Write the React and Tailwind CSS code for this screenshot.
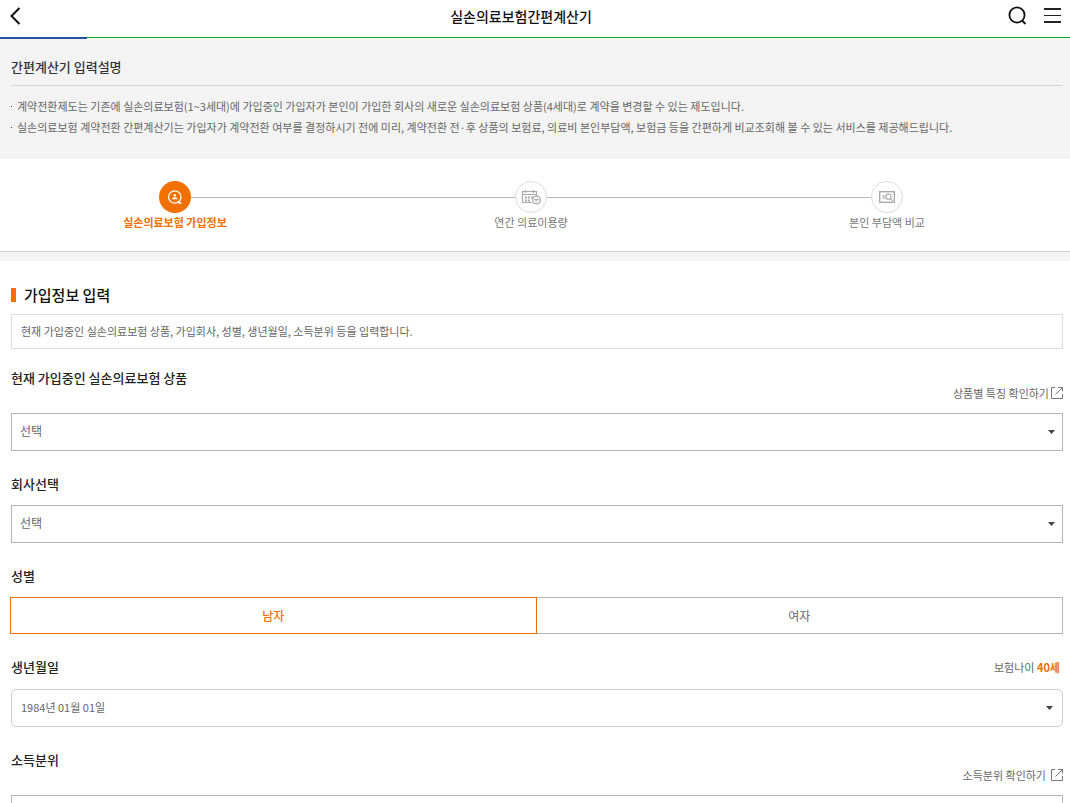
import { useState } from "react";

function BackIcon() {
  return (
    <svg width="12" height="18" viewBox="0 0 12 18" fill="none" stroke="#111" strokeWidth="2">
      <path d="M9.500 1L1.500 9l8 8" />
    </svg>
  );
}

function SearchIcon() {
  return (
    <svg width="20" height="20" viewBox="0 0 20 20" fill="none" stroke="#111" strokeWidth="1.800">
      <circle cx="9" cy="9" r="7.600" />
      <path d="M14 14.500l3.500 3.500" />
    </svg>
  );
}

function MenuIcon() {
  return (
    <svg width="17" height="15" viewBox="0 0 17 15" fill="#222">
      <rect width="17" height="2" y="0" />
      <rect width="17" height="1" y="7" />
      <rect width="17" height="2" y="13" />
    </svg>
  );
}

function PersonSearchIcon() {
  return (
    <svg width="16" height="16" viewBox="0 0 16 16" fill="none" stroke="#fff" strokeWidth="1.300">
      <circle cx="7.800" cy="8" r="6.200" />
      <path d="M10.500 12.200l1.800 1.800h2.200" />
      <circle cx="7.800" cy="6.300" r="1.200" fill="#fff" stroke="none" />
      <path d="M5 10.300c.3-2.600 5.300-2.600 5.600 0z" fill="#fff" stroke="none" />
    </svg>
  );
}

function CalendarIcon() {
  return (
    <svg width="20" height="16" viewBox="0 0 20 16" fill="none" stroke="#aaa">
      <path d="M11 13.500H1.500v-11h14v5M1.500 5.500h14M4.500 1v3M12.500 1v3" strokeWidth="1.200" />
      <path d="M4 8.500h8M4 11.500h6" strokeWidth="1.800" strokeDasharray="2 1" />
      <circle cx="15.500" cy="11" r="3.800" fill="#fff" strokeWidth="1.300" />
      <path d="M13.300 10.500h4.400M14 12h3" strokeWidth="1.200" />
    </svg>
  );
}

function CompareIcon() {
  return (
    <svg width="16" height="12" viewBox="0 0 16 12" fill="none" stroke="#aaa">
      <rect x=".7" y=".7" width="14.600" height="10.600" strokeWidth="1.400" />
      <path d="M3 5h3.500M3 7h3.500M11.300 7.500l2.400 2.300" strokeWidth="1.100" />
      <circle cx="9.500" cy="5.700" r="2.600" strokeWidth="1.100" />
    </svg>
  );
}

function ExternalIcon() {
  return (
    <svg className="mb-[2px]" width="13" height="13" viewBox="0 0 13 13" fill="none" stroke="#777">
      <path d="M5 1.500H1.500v11h11V8M8 1.500h4.500v4M5.500 8.500l7-7" />
    </svg>
  );
}

function Caret({ right }) {
  return (
    <svg
      className={`pointer-events-none absolute top-[17px] ${right}`}
      width="7"
      height="4"
      viewBox="0 0 7 4"
      fill="#444"
    >
      <path d="M0 0h7L3.500 4z" />
    </svg>
  );
}

function Step({ icon, label, active, first, last }) {
  return (
    <li>
      <div className="flex items-center">
        <span className={`h-px flex-1 ${first ? "" : "bg-[#bbb]"}`} />
        <span
          className={`flex size-8 items-center justify-center rounded-full ${
            active ? "bg-[#f07000]" : "border border-[#ddd] bg-white"
          }`}
        >
          {icon}
        </span>
        <span className={`h-px flex-1 ${last ? "" : "bg-[#bbb]"}`} />
      </div>
      <p className={`mt-px text-center text-[11px] leading-4 ${active ? "font-bold text-[#f07000]" : "text-[#777]"}`}>
        {label}
      </p>
    </li>
  );
}

function Bullet({ children }) {
  return (
    <li className="flex gap-[5px]">
      <span className="mt-[10px] size-px shrink-0 bg-[#444]" />
      {children}
    </li>
  );
}

function HelpLink({ children, gap }) {
  return (
    <a href="#" className={`flex items-center self-end text-[11px] leading-5 text-[#666] ${gap}`}>
      {children}
      <ExternalIcon />
    </a>
  );
}

function SelectField({ id, label, options, help }) {
  return (
    <div>
      <div className={`flex justify-between ${help ? "mb-[10px] h-[35px]" : "mb-[11px] h-5"}`}>
        <label htmlFor={id} className="text-[13px] leading-5 font-medium text-[#222]">
          {label}
        </label>
        {help}
      </div>
      <div className="relative">
        <select
          id={id}
          className="block h-[38px] w-full appearance-none border border-[#b5b5b5] bg-white px-2 pb-[2px] text-xs text-[#666]"
        >
          {options.map((o) => (
            <option key={o}>{o}</option>
          ))}
        </select>
        <Caret right="right-2" />
      </div>
    </div>
  );
}

export default function App() {
  const [gender, setGender] = useState("남자");

  return (
    <div className="bg-white font-['Noto_Sans_CJK_KR',sans-serif] text-[#666]">
      <header>
        <div className="flex h-[37px] items-center pr-[9px] pb-[6px] pl-[10px]">
          <button type="button" aria-label="뒤로" className="w-6">
            <BackIcon />
          </button>
          <h1 className="flex-1 text-center text-sm leading-5 font-medium text-[#111]">실손의료보험간편계산기</h1>
          <div className="flex items-center gap-4">
            <button type="button" aria-label="검색">
              <SearchIcon />
            </button>
            <button type="button" aria-label="메뉴">
              <MenuIcon />
            </button>
          </div>
        </div>
        <div className="flex h-[2px] items-start bg-[#f3f3f3]">
          <span className="h-[2px] w-[87px] bg-[#2850a0]" />
          <span className="h-px flex-1 bg-[#12a52c]" />
        </div>
      </header>

      <section className="h-[120px] bg-[#f3f3f3] pt-[18px] pr-[7px] pl-[11px]">
        <h2 className="border-b border-[#d5d5d5] pb-2 text-[13px] leading-5 font-medium text-[#333]">
          간편계산기 입력설명
        </h2>
        <ul className="pt-[10px] text-[11px] leading-[21px]">
          <Bullet>
            계약전환제도는 기존에 실손의료보험(1~3세대)에 가입중인 가입자가 본인이 가입한 회사의 새로운 실손의료보험
            상품(4세대)로 계약을 변경할 수 있는 제도입니다.
          </Bullet>
          <Bullet>
            실손의료보험 계약전환 간편계산기는 가입자가 계약전환 여부를 결정하시기 전에 미리, 계약전환 전·후 상품의
            보험료, 의료비 본인부담액, 보험금 등을 간편하게 비교조회해 볼 수 있는 서비스를 제공해드립니다.
          </Bullet>
        </ul>
      </section>

      <ol className="-ml-[3px] grid h-[92px] grid-cols-3 pt-[22px] pr-[5px]">
        <Step icon={<PersonSearchIcon />} label="실손의료보험 가입정보" active first />
        <Step icon={<CalendarIcon />} label="연간 의료이용량" />
        <Step icon={<CompareIcon />} label="본인 부담액 비교" last />
      </ol>
      <div className="h-[10px] border-t border-[#d5d5d5] bg-[#f3f3f3]" />

      <main className="pt-6 pr-[7px] pb-8 pl-[11px]">
        <div className="flex items-center gap-2">
          <span className="h-[14px] w-[5px] bg-[#f07000]" />
          <h2 className="text-[15px] leading-5 font-medium text-[#111]">가입정보 입력</h2>
        </div>
        <p className="mt-[9px] border border-[#ddd] px-[9px] py-[6px] text-[11px] leading-[21px]">
          현재 가입중인 실손의료보험 상품, 가입회사, 성별, 생년월일, 소득분위 등을 입력합니다.
        </p>

        <form className="mt-[19px] flex flex-col gap-[23px]">
          <SelectField
            id="product"
            label="현재 가입중인 실손의료보험 상품"
            options={["선택"]}
            help={<HelpLink gap="gap-px">상품별 특징 확인하기</HelpLink>}
          />
          <SelectField id="company" label="회사선택" options={["선택"]} />

          <div>
            <h3 id="gender" className="mb-[11px] text-[13px] leading-5 font-medium text-[#222]">
              성별
            </h3>
            <div role="group" aria-labelledby="gender" className="-ml-px grid h-[37px] grid-cols-2">
              {["남자", "여자"].map((g) => (
                <button
                  key={g}
                  type="button"
                  aria-pressed={gender === g}
                  onClick={() => setGender(g)}
                  className={`border text-xs ${
                    gender === g
                      ? "border-[#f07000] font-medium text-[#f07000]"
                      : "border-[#b5b5b5] first:border-r-0 last:border-l-0"
                  }`}
                >
                  {g}
                </button>
              ))}
            </div>
          </div>

          <div>
            <div className="mb-3 flex justify-between">
              <label htmlFor="birth" className="text-[13px] leading-5 font-medium text-[#222]">
                생년월일
              </label>
              <p className="pr-[3px] text-[11px] leading-5">
                보험나이 <strong className="text-[#f07000]">40세</strong>
              </p>
            </div>
            <div className="relative">
              <select
                id="birth"
                className="block h-[38px] w-full appearance-none rounded-[5px] border border-[#ccc] bg-white px-[9px] pb-[2px] text-[11px] text-[#666]"
              >
                <option>1984년 01월 01일</option>
              </select>
              <Caret right="right-[10px]" />
            </div>
          </div>

          <SelectField
            id="income"
            label="소득분위"
            options={["선택"]}
            help={<HelpLink gap="gap-1">소득분위 확인하기</HelpLink>}
          />
        </form>
      </main>
    </div>
  );
}
